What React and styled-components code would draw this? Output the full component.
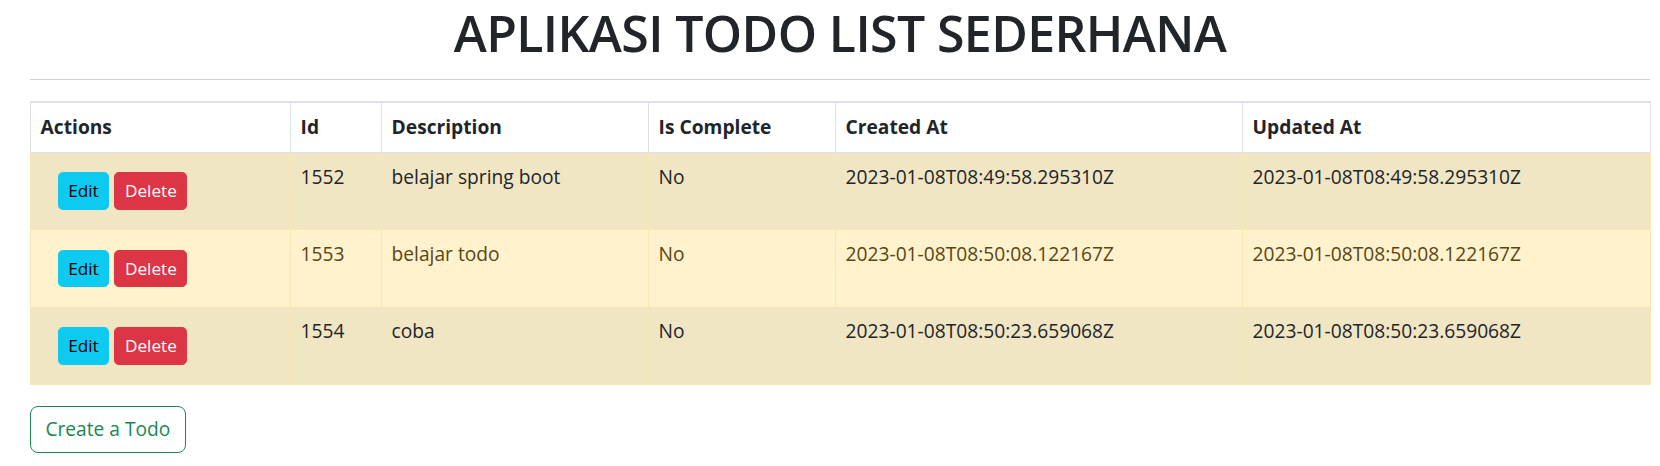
import React from "react";
import styled, { createGlobalStyle } from "styled-components";

const GlobalStyle = createGlobalStyle`
  body {
    margin: 0;
    background: #ffffff;
    color: #212529;
    font-family: "Open Sans", "Noto Sans", sans-serif;
    font-size: 19.2px;
    line-height: 1.5;
  }
  * {
    box-sizing: border-box;
  }
`;

const Page = styled.div`
  padding: 2px 10px 0 30px;
`;

const Title = styled.h1`
  margin: 0 0 14px;
  text-align: center;
  font-size: 50px;
  font-weight: 600;
  letter-spacing: -0.6px;
  line-height: 1.25;
  color: #212529;
`;

const Divider = styled.hr`
  margin: 0 0 21px;
  border: 0;
  border-top: 1px solid #cfd0d1;
`;

const Table = styled.table`
  width: 100%;
  table-layout: fixed;
  border-collapse: collapse;
  border-top: 2px solid #dee2e6;
`;

const HeadCell = styled.th`
  padding: 10.5px 9.6px;
  text-align: left;
  font-weight: 700;
  color: #212529;
  background: #ffffff;
  border: 1px solid #dee2e6;
  border-top: 0;
`;

const Row = styled.tr`
  background: ${(p) => (p.$striped ? "#f1e6c4" : "#fff2cc")};
  color: ${(p) => (p.$striped ? "#212529" : "#5a4614")};
`;

const Cell = styled.td`
  padding: 9.6px;
  vertical-align: top;
  border: 1px solid #f8e7b2;
`;

const Actions = styled.div`
  display: flex;
  gap: 5px;
  padding: 9.6px 0 9.6px 17px;
`;

const SmallButton = styled.button`
  font-family: inherit;
  font-size: 17.2px;
  line-height: 1.5;
  padding: 5px 9.6px;
  border: 1px solid ${(p) => (p.$danger ? "#dc3545" : "#0dcaf0")};
  border-radius: 4.8px;
  background: ${(p) => (p.$danger ? "#dc3545" : "#0dcaf0")};
  color: ${(p) => (p.$danger ? "#ffffff" : "#000000")};
  cursor: pointer;
`;

const CreateButton = styled.button`
  margin-top: 21px;
  font-family: inherit;
  font-size: 19.2px;
  line-height: 1.5;
  padding: 8px 14.4px;
  border: 1px solid #198754;
  border-radius: 8px;
  background: transparent;
  color: #198754;
  cursor: pointer;
`;

const columns = [
  { label: "Actions", width: 260 },
  { label: "Id", width: 91 },
  { label: "Description", width: 267 },
  { label: "Is Complete", width: 187 },
  { label: "Created At", width: 407 },
  { label: "Updated At", width: 408 },
];

const todos = [
  {
    id: 1552,
    description: "belajar spring boot",
    createdAt: "2023-01-08T08:49:58.295310Z",
  },
  {
    id: 1553,
    description: "belajar todo",
    createdAt: "2023-01-08T08:50:08.122167Z",
  },
  {
    id: 1554,
    description: "coba",
    createdAt: "2023-01-08T08:50:23.659068Z",
  },
];

function App() {
  return (
    <Page>
      <GlobalStyle />
      <Title>APLIKASI TODO LIST SEDERHANA</Title>
      <Divider />
      <Table>
        <colgroup>
          {columns.map((c) => (
            <col key={c.label} width={c.width} />
          ))}
        </colgroup>
        <thead>
          <tr>
            {columns.map((c) => (
              <HeadCell key={c.label}>{c.label}</HeadCell>
            ))}
          </tr>
        </thead>
        <tbody>
          {todos.map((todo, i) => (
            <Row key={todo.id} $striped={i % 2 === 0}>
              <Cell>
                <Actions>
                  <SmallButton>Edit</SmallButton>
                  <SmallButton $danger>Delete</SmallButton>
                </Actions>
              </Cell>
              <Cell>{todo.id}</Cell>
              <Cell>{todo.description}</Cell>
              <Cell>No</Cell>
              <Cell>{todo.createdAt}</Cell>
              <Cell>{todo.createdAt}</Cell>
            </Row>
          ))}
        </tbody>
      </Table>
      <CreateButton>Create a Todo</CreateButton>
    </Page>
  );
}

export default App;
